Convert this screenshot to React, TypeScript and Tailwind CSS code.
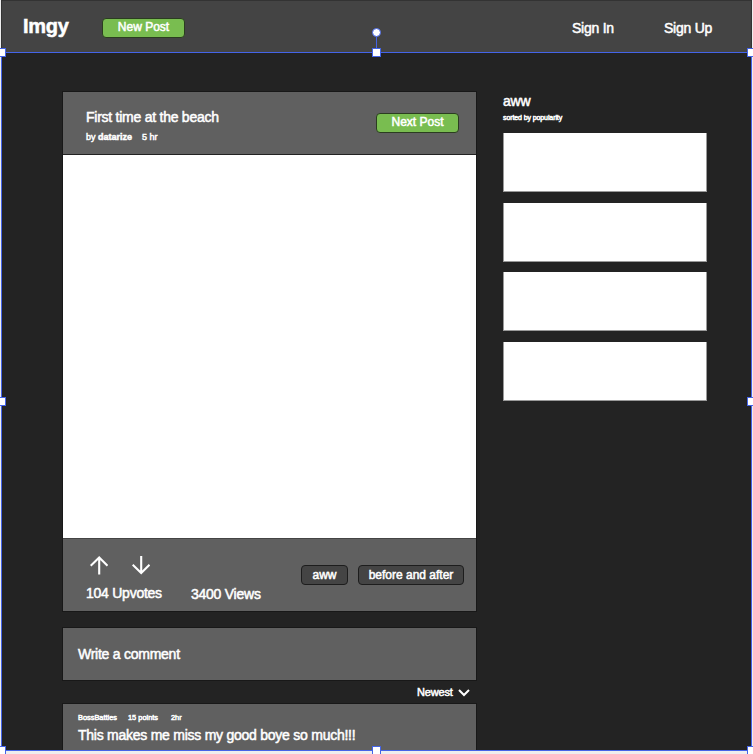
import React from "react";

const FONT = "font-['Liberation_Sans',Arial,sans-serif]";

const BODY = "text-[14px] leading-[18px] tracking-[-0.25px]";

function Label({ children, className = "" }: { children: React.ReactNode; className?: string }) {
  return (
    <span className={`block whitespace-nowrap text-white [-webkit-text-stroke:0.5px_white] ${className}`}>
      {children}
    </span>
  );
}

function GreenButton({ children, className = "" }: { children: React.ReactNode; className?: string }) {
  return (
    <button
      className={`flex h-5 w-[83px] shrink-0 justify-center rounded-[4px] border border-[#2b3d20] bg-[#79bd50] ${className}`}
    >
      <Label className="text-[12px] leading-[17px]">{children}</Label>
    </button>
  );
}

function Tag({ children, className = "" }: { children: React.ReactNode; className?: string }) {
  return (
    <div className={`flex h-5 shrink-0 justify-center rounded-[4px] border border-[#1d1d1d] bg-[#444] ${className}`}>
      <Label className="text-[12px] leading-[18px]">{children}</Label>
    </div>
  );
}

function Handle({ className }: { className: string }) {
  return <div className={`absolute size-[9px] border border-[#4464e8] bg-white ${className}`} />;
}

function Selection() {
  return (
    <div className="pointer-events-none absolute top-[52px] left-px h-[699px] w-[751px] border border-[#4464e8]">
      <div className="absolute -top-[16px] left-[374px] h-3 w-px bg-[#4464e8]" />
      <Handle className="-top-[25px] left-[370px] rounded-full" />
      <Handle className="-top-[5px] -left-[5px]" />
      <Handle className="-top-[5px] left-[370px]" />
      <Handle className="-top-[5px] left-[745px]" />
      <Handle className="top-[344px] -left-[5px]" />
      <Handle className="top-[344px] left-[745px]" />
      <Handle className="top-[693px] -left-[5px]" />
      <Handle className="top-[693px] left-[370px]" />
      <Handle className="top-[693px] left-[745px]" />
    </div>
  );
}

export default function App() {
  return (
    <div className={`relative h-[754px] w-[753px] overflow-hidden bg-[#eee] px-px ${FONT}`}>
      <div className="flex h-[750px] flex-col overflow-hidden bg-[#232323]">
        <header className="flex h-[52px] shrink-0 items-start border border-b-0 border-[#333] bg-[#444] pl-[21px]">
          <Label className="mt-[13px] w-[79px] text-[20px] leading-6 font-bold tracking-[-0.3px]">Imgy</Label>
          <GreenButton className="mt-[17px]">New Post</GreenButton>
          <Label className={`mt-[18px] ml-[387px] w-[92px] ${BODY}`}>Sign In</Label>
          <Label className={`mt-[18px] ${BODY}`}>Sign Up</Label>
        </header>

        <main className="flex pl-[61px]">
          <section className="w-[415px] shrink-0 pt-[39px]">
            <article className="border border-[#181818] bg-[#606060]">
              <div className="flex h-[63px] items-start border-b border-[#222] pl-[23px]">
                <div className="w-[290px] pt-[16px]">
                  <Label className={BODY}>First time at the beach</Label>
                  <div className="mt-[5px] flex text-[9px] leading-3">
                    <Label className="w-[56px]">
                      by <b>datarize</b>
                    </Label>
                    <Label>5 hr</Label>
                  </div>
                </div>
                <GreenButton className="mt-[21px]">Next Post</GreenButton>
              </div>
              <div className="h-[383px] bg-white" />
              <div className="flex h-[73px] items-start border-t border-[#444] pl-[23px]">
                <div className="w-[105px]">
                  <div className="flex h-[53px]">
                    <svg className="mt-[17px] ml-[4px] h-[19px] w-[18px]" viewBox="0 0 18 19" fill="none" stroke="white" strokeWidth="2.1">
                      <path d="M9.2 18.5V2M.7 9.7 9.2 1.5l8.3 8.2" />
                    </svg>
                    <svg className="mt-[17px] ml-[24px] h-[19px] w-[18px]" viewBox="0 0 18 19" fill="none" stroke="white" strokeWidth="2.1">
                      <path d="M9.2 0v16.5M.7 8.8 9.2 17l8.3-8.2" />
                    </svg>
                  </div>
                  <Label className={`-mt-[8px] ${BODY}`}>104 Upvotes</Label>
                </div>
                <Label className={`mt-[46px] w-[110px] ${BODY}`}>3400 Views</Label>
                <Tag className="mt-[26px] w-[47px]">aww</Tag>
                <Tag className="mt-[26px] ml-[10px] w-[106px]">before and after</Tag>
              </div>
            </article>

            <div className="mt-[15px] h-[54px] border border-[#181818] bg-[#606060] pt-[17px] pl-[15px]">
              <Label className={BODY}>Write a comment</Label>
            </div>

            <div className="flex h-[22px] items-center pl-[355px]">
              <Label className="w-[41px] text-[11px] leading-[14px] tracking-[-0.15px]">Newest</Label>
              <svg className="mt-px h-[8px] w-[12px]" viewBox="0 0 12 8" fill="none" stroke="white" strokeWidth="2">
                <path d="m1 1 5 5 5-5" />
              </svg>
            </div>

            <article className="h-[60px] border border-[#181818] bg-[#606060] pt-[9px] pl-[15px]">
              <div className="flex text-[7.4px] leading-[10px]">
                <Label className="w-[50px] [-webkit-text-stroke-width:0.2px]">BossBattles</Label>
                <Label className="w-[43px] [-webkit-text-stroke-width:0.2px]">15 points</Label>
                <Label className="[-webkit-text-stroke-width:0.2px]">2hr</Label>
              </div>
              <Label className={`mt-[3px] ${BODY}`}>This makes me miss my good boye so much!!!</Label>
            </article>
          </section>

          <aside className="ml-[25px] w-[205px] pt-[40px]">
            <Label className={`ml-px ${BODY} [-webkit-text-stroke-width:0.7px]`}>aww</Label>
            <Label className="mt-[3px] ml-px text-[7px] leading-[10px] tracking-[-0.1px]">sorted by popularity</Label>
            <div className="mt-[10px] flex flex-col gap-[10.5px] pl-px">
              <div className="h-[59px] border-r border-b border-l border-[#999] bg-white" />
              <div className="h-[59px] border-r border-b border-l border-[#999] bg-white" />
              <div className="h-[59px] border-r border-b border-l border-[#999] bg-white" />
              <div className="h-[59px] border-r border-b border-l border-[#999] bg-white" />
            </div>
          </aside>
        </main>
      </div>
      <Selection />
    </div>
  );
}
